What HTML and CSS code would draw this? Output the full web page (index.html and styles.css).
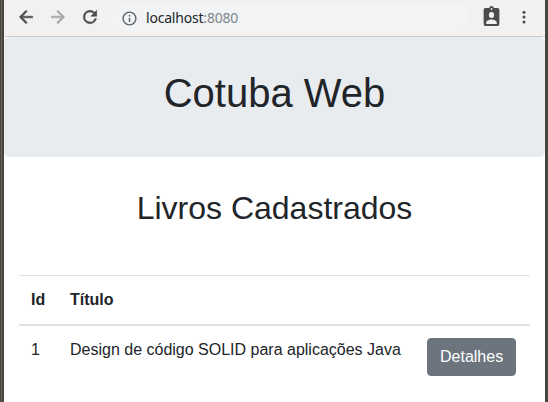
FILE: index.html
```html
<!DOCTYPE html>
<html lang="pt-BR">
<head>
<meta charset="utf-8">
<title>Cotuba Web</title>
<link rel="stylesheet" href="styles.css">
</head>
<body>
<div class="window">
  <header class="toolbar">
    <svg class="nav-icon" viewBox="0 0 24 24"><path d="M20 11H7.83l5.59-5.59L12 4l-8 8 8 8 1.41-1.41L7.83 13H20z"/></svg>
    <svg class="nav-icon disabled" viewBox="0 0 24 24"><path d="M12 4l-1.41 1.41L16.17 11H4v2h12.17l-5.58 5.59L12 20l8-8z"/></svg>
    <svg class="nav-icon" viewBox="0 0 24 24"><path d="M17.65 6.35A7.96 7.96 0 0 0 12 4a8 8 0 1 0 7.73 10h-2.08A6 6 0 1 1 12 6c1.66 0 3.14.69 4.22 1.78L13 11h7V4z"/></svg>
    <div class="address">
      <svg class="info-icon" viewBox="0 0 24 24"><path d="M11 7h2v2h-2zm0 4h2v6h-2zm1-9a10 10 0 1 0 0 20 10 10 0 0 0 0-20zm0 18a8 8 0 1 1 0-16 8 8 0 0 1 0 16z"/></svg>
      <span class="url">localhost<span class="port">:8080</span></span>
    </div>
    <svg class="profile-icon" viewBox="0 0 24 24" preserveAspectRatio="none"><path d="M19 3h-4.18a3 3 0 0 0-5.64 0H5a2 2 0 0 0-2 2v14a2 2 0 0 0 2 2h14a2 2 0 0 0 2-2V5a2 2 0 0 0-2-2zm-7 0a1 1 0 1 1 0 2 1 1 0 0 1 0-2zm0 4a3 3 0 1 1 0 6 3 3 0 0 1 0-6zm6 12H6v-1.4c0-2 4-3.1 6-3.1s6 1.1 6 3.1z"/></svg>
    <svg class="menu-icon" viewBox="0 0 24 24"><circle cx="12" cy="5.5" r="2"/><circle cx="12" cy="12" r="2"/><circle cx="12" cy="18.5" r="2"/></svg>
  </header>
  <div class="page">
    <div class="jumbotron"><h1>Cotuba Web</h1></div>
    <main class="container">
      <h2>Livros Cadastrados</h2>
      <table class="table">
        <colgroup><col class="col-id"><col><col class="col-action"></colgroup>
        <thead><tr><th>Id</th><th>Título</th><th></th></tr></thead>
        <tbody><tr><td>1</td><td>Design de código SOLID para aplicações Java</td><td><a class="btn">Detalhes</a></td></tr></tbody>
      </table>
    </main>
  </div>
</div>
</body>
</html>
```
FILE: styles.css
```css
* { box-sizing: border-box; }

body {
  margin: 0;
  font: 16px/1.5 "Liberation Sans", Arial, sans-serif;
  color: #212529;
  background: #fff;
}

.window {
  display: flex;
  flex-direction: column;
  height: 402px;
  overflow: hidden;
  padding: 0 3px 0 4px;
  background: linear-gradient(90deg, #48453e 1px, #6a665e 1px 2px, #48453e 2px 4px, #45463f 4px);
}

.toolbar {
  display: flex;
  flex: none;
  align-items: center;
  height: 37px;
  padding: 0 12px 2px;
  background: #f2f1f0;
  border-bottom: 1px solid #cfcdca;
}

.toolbar svg { flex: none; fill: #4c4c4c; }
.nav-icon { width: 20px; height: 20px; margin-right: 12px; stroke: #4c4c4c; stroke-width: 0.7; }
.toolbar .disabled { fill: #a8a7a6; stroke: #a8a7a6; }

.address {
  display: flex;
  align-items: center;
  flex: 1;
  height: 29px;
  margin-left: -2px;
  padding: 2px 0 0 11px;
  border-radius: 14px;
  background: #f1f3f4;
}

.toolbar .info-icon { width: 17px; height: 17px; margin-right: 8px; fill: #5f6368; }
.url { font: 14px/20px "Noto Sans", "Open Sans", sans-serif; letter-spacing: -0.2px; }
.port { color: #80868b; }
.profile-icon { width: 21px; height: 24px; margin: 0 13px 1px 11px; }
.menu-icon { width: 18px; height: 18px; }

.page { flex: 1; background: #fff; }

.jumbotron {
  height: 120px;
  padding: 32px 15px;
  background: #e9ecef;
  border-radius: 5px;
  text-align: center;
}

h1, h2 { margin: 0; font-weight: 400; line-height: 1.2; }
h1 { font-size: 40px; }
h2 { font-size: 32px; text-align: center; }

.container { padding: 32px 15px 0; }

.table {
  width: 100%;
  margin-top: 48px;
  table-layout: fixed;
  border-collapse: collapse;
}

.col-id { width: 39px; }
.col-action { width: 115px; }

th, td {
  padding: 12px;
  border-top: 1px solid #dee2e6;
  text-align: left;
  vertical-align: top;
  white-space: nowrap;
}

thead th { border-bottom: 2px solid #dee2e6; }

.btn {
  display: inline-block;
  padding: 6px 12px;
  border: 1px solid #6c757d;
  border-radius: 4px;
  background: #6c757d;
  color: #fff;
  vertical-align: middle;
}
```
